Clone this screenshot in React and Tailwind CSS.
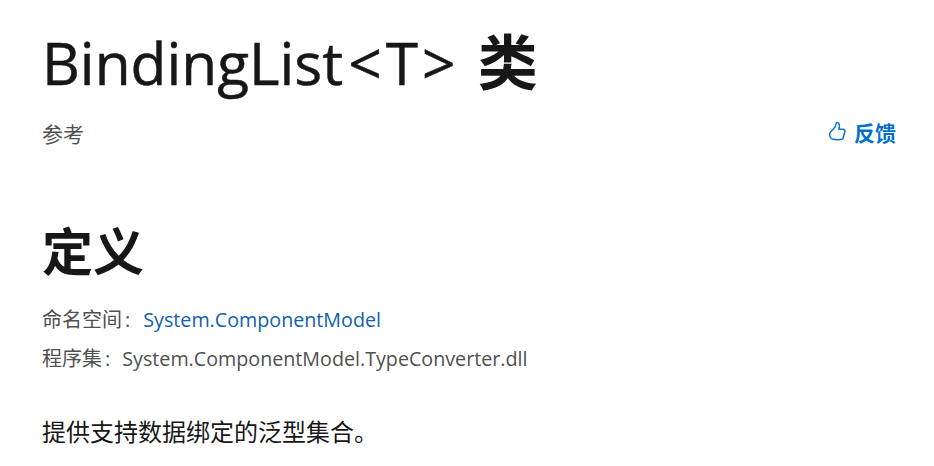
import React from "react";

const cjk = "font-['Segoe_UI','Open_Sans','Noto_Sans_CJK_SC',sans-serif]";

export default function App() {
  return (
    <div className={`w-[934px] h-[466px] overflow-hidden bg-white pl-[42px] pr-[38px] ${cjk} text-[#171717]`}>
      <h1 className="text-[58.6px] leading-[78px] pt-[23px] font-normal whitespace-nowrap [-webkit-text-stroke:0.5px_#171717]">
        BindingList<span className="tracking-[4px] ml-[5px]">&lt;T&gt;</span> <span className="text-[60px] font-semibold ml-[3px] [-webkit-text-stroke:0]">类</span>
      </h1>
      <div className="flex items-center justify-between mt-[22px] h-[24px]">
        <span className="text-[21px] text-[#505050]">参考</span>
        <a className="flex items-center gap-[7px] text-[#0070cc] font-bold text-[21px] leading-[24px] mb-[4px]">
          <svg className="mb-[5px]" width="18" height="20" viewBox="0 0 18 20" fill="none" stroke="#0f72d0" strokeWidth="1.5" strokeLinejoin="round">
            <path d="M1.2 11.2c-.6 1.6-.6 3.7.2 5.3.5 1 1.5 1.6 2.7 1.8 2.4.4 5.6.4 8 .2 1.3-.1 2-.9 2.2-2l1.6-6c.3-1.200-.5-2.200-1.700-2.200H9.800c.5-1.500.7-3.100.5-4.600-.2-1.300-1-2.100-2-2.100-.8 0-1.200.6-1.300 1.400-.2 1.800-1 3.400-2.300 4.700L1.200 11.200z" />
          </svg>
          反馈
        </a>
      </div>
      <h2 className="text-[51px] leading-[66px] font-bold mt-[71px]">定义</h2>
      <div className="mt-[16px] text-[20px] leading-[39px] text-[#505050]">
        <div>命名空间<span className="ml-[3px]">:</span><span className="text-[#0f62ae] text-[19.7px] ml-[13px]">System.ComponentModel</span></div>
        <div>程序集<span className="ml-[3px]">:</span><span className="text-[19.7px] ml-[12px]">System.ComponentModel.TypeConverter.dll</span></div>
      </div>
      <p className="text-[24px] leading-[32px] mt-[38px]">提供支持数据绑定的泛型集合。</p>
    </div>
  );
}
